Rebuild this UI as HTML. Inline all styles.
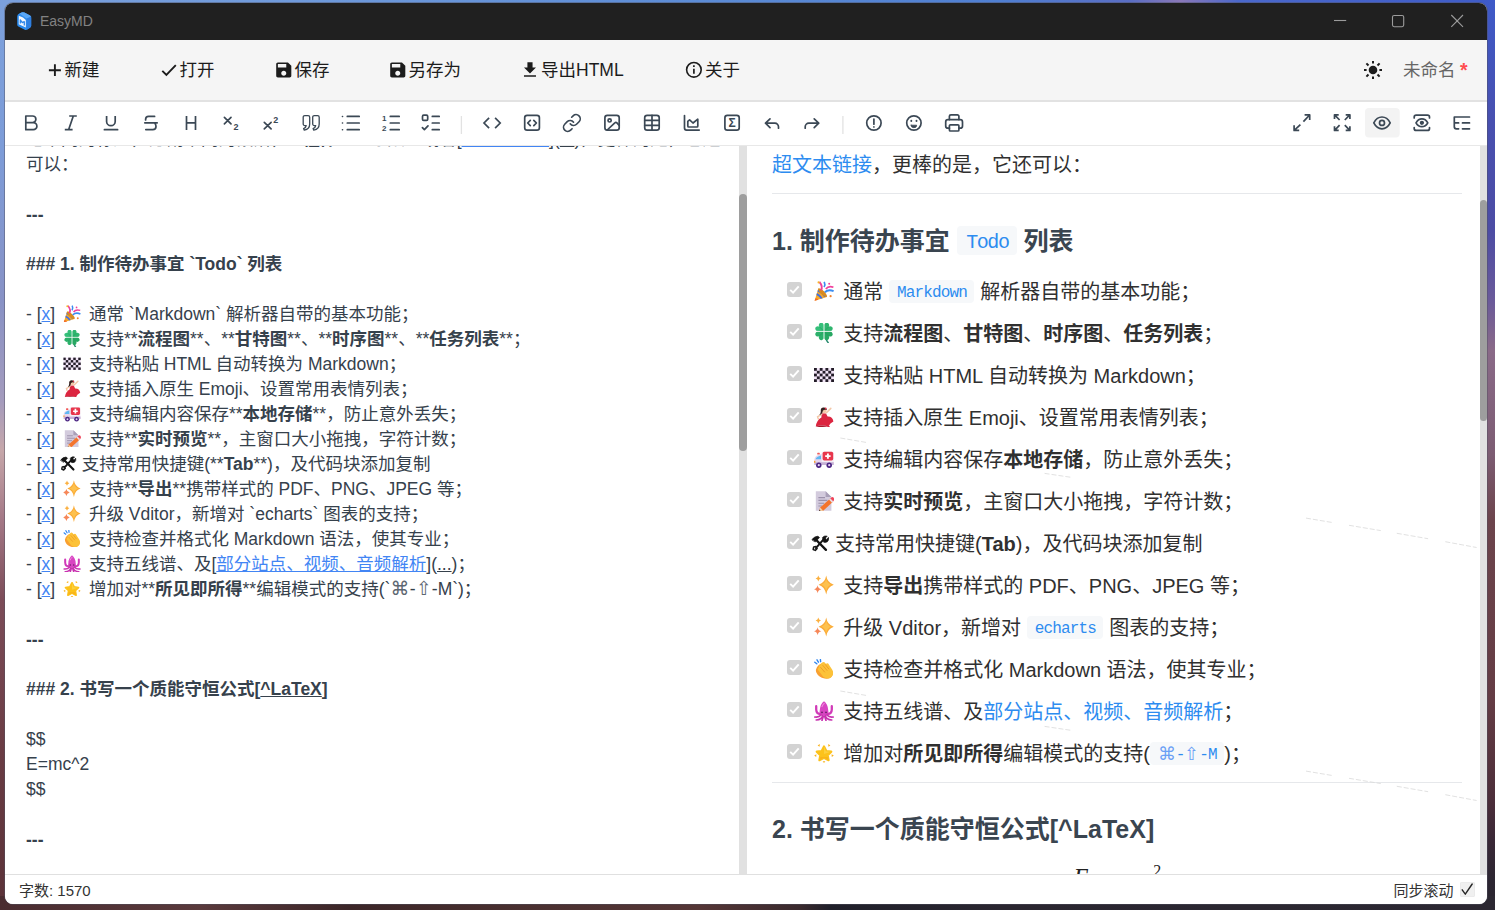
<!DOCTYPE html>
<html lang="zh-CN">
<head>
<meta charset="utf-8">
<title>EasyMD</title>
<style>
*{box-sizing:border-box;margin:0;padding:0}
html,body{width:1495px;height:910px;overflow:hidden}
body{position:relative;background:#4a3034;font-family:"Liberation Sans","Noto Sans CJK SC",sans-serif;}
.abs{position:absolute}
#bgtop{left:0;top:0;width:1495px;height:12px;background:linear-gradient(90deg,#7aa0dc 0,#6f9adb 300px,#5c8cd6 700px,#4f7fd2 1000px,#5a6ec4 1130px,#8a78b8 1180px,#4a68cc 1240px,#3f5cc8 1495px)}
#bgleft{left:0;top:0;width:14px;height:910px;background:linear-gradient(180deg,#7ba0dc 0,#7d9cd8 150px,#8892c6 300px,#a49bbd 400px,#c6a7aa 450px,#a47886 520px,#7c4c58 600px,#6a3c44 750px,#5a3238 910px)}
#bgright{left:1480px;top:0;width:15px;height:910px;background:linear-gradient(180deg,#3e5ac8 0,#4850b0 120px,#4c4ca4 230px,#6a5a9a 300px,#8a6a88 350px,#7c5c72 455px,#6c444c 520px,#643c44 700px,#4c2e3a 800px,#3a2836 840px,#2c2632 880px,#2a2630 910px)}
#bgbot{left:0;top:896px;width:1495px;height:14px;background:linear-gradient(90deg,#4a2c30 0,#5a3a3c 200px,#3c2628 350px,#4a3030 520px,#553636 700px,#3a2a2e 800px,#20202a 830px,#2a2630 1000px,#2c2832 1495px)}
#win{left:5px;top:3px;width:1482px;height:901px;border-radius:8px;overflow:hidden;background:#fff;box-shadow:0 0 0 1px rgba(80,80,95,.45)}
#title{left:0;top:0;width:1482px;height:37px;background:#202020}
#title .name{left:35px;top:9px;font-size:14px;line-height:18px;color:#828282;white-space:nowrap}
#menu{left:0;top:37px;width:1482px;height:60px;background:#f5f5f5}
#menu .mi{position:absolute;top:17px;font-size:17.5px;line-height:26px;color:#1c1c1c;white-space:nowrap}
#menusep{left:0;top:97px;width:1482px;height:2px;background:#e2e2e2}
#tb{left:0;top:99px;width:1482px;height:44px;background:#fff;border-bottom:1px solid #e8e8e8}

#lp{left:0;top:143px;width:734px;height:728px;overflow:hidden;background:#fff;color:#36414c;font-size:17.5px}
#lp .ln{position:absolute;left:21px;height:25px;line-height:25px;white-space:nowrap}
#lp .ln{margin-top:-143px}
#lp .b,#lp b{font-weight:700}
#lp a{color:#4285f4;text-decoration:underline}
#lp u{text-decoration:underline}
#lp i{font-style:italic}
.eb{display:inline-block;position:relative;height:1px;vertical-align:baseline}
.eb svg{position:absolute;left:50%;bottom:-4px;transform:translateX(-50%)}
.sym{font-family:"DejaVu Sans","Noto Sans CJK SC",sans-serif;margin:0 0.2px;font-size:19px;line-height:10px;color:#5d6771}
#rp .sym{margin:0 -0.2px;color:#6b9ff5;font-size:18px;letter-spacing:0;line-height:10px}
#rp .art{position:absolute;left:0;top:0;pointer-events:none}
#ls{left:734px;top:143px;width:8px;height:728px;background:#e1e1e1}
#ls i{position:absolute;left:0;top:48px;width:8px;height:257px;border-radius:4px;background:#9e9e9e}
#rp{left:742px;top:143px;width:733px;height:728px;overflow:hidden;background:#fff;color:#303030;font-size:20px}
#rp>*{margin-top:-143px;margin-left:-742px}
#rp .rl{position:absolute;height:30px;line-height:30px;white-space:nowrap}
#rp .rh{position:absolute;left:767px;height:36px;line-height:36px;font-size:25px;font-weight:700;white-space:nowrap;color:#3a4550}
#rp a{color:#2d8cf0}
#rp b{font-weight:700}
#rp .hr{position:absolute;left:767px;width:690px;height:1px;background:#e6e8eb}
#rp code{font-family:"Liberation Mono",monospace;font-size:16px;letter-spacing:-0.85px;color:#2d8cf0;background:#f6f8fa;border-radius:4px;padding:4.2px 6.9px 0.3px 7.7px;margin:0 0.7px 0 0.5px;font-weight:400;position:relative;top:-1.5px}
#rp .rh code{font-size:20px;letter-spacing:-1.4px;padding:5px 8px 1px 9.4px;margin:0;top:-2px}
#rp .cb{position:absolute;left:782px;width:15px;height:15px;border-radius:3px;background:#d3d3d3}
#rp .cb svg{display:block}
#rp .math{position:absolute;font-family:"Liberation Serif",serif;font-size:24.500px;line-height:30px;white-space:nowrap;color:#222;word-spacing:3.500px;letter-spacing:0.500px}
#rp .math sup{font-size:16px;vertical-align:10px;line-height:0}
#rs{left:1475px;top:143px;width:7px;height:728px;background:#e1e1e1}
#rs i{position:absolute;left:0;top:54px;width:7px;height:221px;border-radius:3.5px;background:#9e9e9e}
#ft{left:0;top:871px;width:1482px;height:30px;background:#fff;border-top:1px solid #e0e0e0;font-size:15px;line-height:20px;color:#333}
#ft .fcb{left:1455px;top:7.200px;width:14.5px;height:14.5px;border-radius:2px;background:#f0f0f0;font-family:"DejaVu Sans",sans-serif;font-size:17px;line-height:13px;text-align:center;color:#222;box-shadow:inset 0 0 0 0.6px #e6e6e6}
#ft .fcb svg{display:block}
</style>
</head>
<body>
<div id="bgtop" class="abs"></div>
<div id="bgleft" class="abs"></div>
<div id="bgright" class="abs"></div>
<div id="bgbot" class="abs"></div>
<div id="win" class="abs">
<div id="title" class="abs"><span class="name abs">EasyMD</span></div>
<div id="menu" class="abs">
<span class="mi" style="left:59.5px">新建</span>
<span class="mi" style="left:174.5px">打开</span>
<span class="mi" style="left:289.5px">保存</span>
<span class="mi" style="left:403.5px">另存为</span>
<span class="mi" style="left:536px">导出HTML</span>
<span class="mi" style="left:700px">关于</span>
<span class="mi" style="left:1398px;color:#666">未命名</span>
<span class="mi" style="left:1455px;color:#ff4d4f;top:16.5px;font-weight:700;font-size:19.5px">*</span>
</div>
<div id="menusep" class="abs"></div>
<div id="tb" class="abs"></div>
<!--PS--><div id="lp" class="abs">
<div class="ln " style="top:123.5px">记不同的标题，分割不同的段落，**<b>粗体</b>**、*<i>斜体</i>* 或者[<a>超文本链接</a>](<u>...</u>)，更棒的是，它还</div>
<div class="ln " style="top:148.5px">可以：</div>
<div class="ln b" style="top:199.5px">---</div>
<div class="ln b" style="top:248.5px">### 1. 制作待办事宜 `Todo` 列表</div>
<div class="ln " style="top:298.5px">- [<a>x</a>] <span class="eb" style="width:24px"><svg width="17.5" height="17.5" viewBox="0 0 20 20" style="bottom:-2.5px"><path d="M0.6 19.7 L4.3 7.6 Q9.6 9.2 12.9 15.9 Z" fill="#f7a928"/><path d="M3 12 Q6.4 13.2 8.7 17.2 L6.7 17.8 Q5 14.8 2.4 13.9 Z M4.1 8.5 Q8.8 10 11.8 15.3 L10.2 16.2 Q7.6 11.9 3.5 10.4Z" fill="#3f6fe4"/><path d="M1.4 17.2 Q3.3 17.6 4.5 18.8 L0.6 19.7Z" fill="#f2682a"/><ellipse cx="8.6" cy="11.7" rx="1.9" ry="5.9" transform="rotate(-46 8.6 11.7)" fill="#d98a1e"/><path d="M7 9.2 Q9.2 5.4 5.4 0.8" stroke="#f0409a" stroke-width="1.9" fill="none"/><path d="M10.8 11.2 Q14.5 8 19.6 10.2" stroke="#3b8cf0" stroke-width="1.9" fill="none"/><path d="M11.8 8 Q14.5 4.4 19.4 6.2" stroke="#f0409a" stroke-width="1.7" fill="none"/><path d="M10 6 Q11.6 3.6 10.2 0.8" stroke="#3b8cf0" stroke-width="1.7" fill="none"/><circle cx="4.6" cy="1.4" r="1.1" fill="#f8b62a"/><circle cx="15.2" cy="2.8" r="1" fill="#f0409a"/><circle cx="16.6" cy="15.2" r="1.1" fill="#f08030"/></svg></span> 通常 `Markdown` 解析器自带的基本功能；</div>
<div class="ln " style="top:323.5px">- [<a>x</a>] <span class="eb" style="width:24px"><svg width="17.5" height="17.5" viewBox="0 0 20 20" style="bottom:-2.5px"><path d="M10.3 9 Q10.8 15.5 14.2 19.7" stroke="#2a8a70" stroke-width="1.5" fill="none" stroke-linecap="round"/><path d="M0 0.6 C-6.4 -2.6 -5.8 -8.8 -2.7 -8.8 C-1.2 -8.8 0 -7.8 0 -6.6 C0 -7.8 1.2 -8.8 2.7 -8.8 C5.8 -8.8 6.4 -2.6 0 0.6Z" transform="translate(10 8.4) rotate(-45)" fill="#35c07a"/><path d="M0 0.6 C-6.4 -2.6 -5.8 -8.8 -2.7 -8.8 C-1.2 -8.8 0 -7.8 0 -6.6 C0 -7.8 1.2 -8.8 2.7 -8.8 C5.8 -8.8 6.4 -2.6 0 0.6Z" transform="translate(10 8.4) rotate(45)" fill="#2fb56e"/><path d="M0 0.6 C-6.4 -2.6 -5.8 -8.8 -2.7 -8.8 C-1.2 -8.8 0 -7.8 0 -6.6 C0 -7.8 1.2 -8.8 2.7 -8.8 C5.8 -8.8 6.4 -2.6 0 0.6Z" transform="translate(10 8.4) rotate(135)" fill="#27a862"/><path d="M0 0.6 C-6.4 -2.6 -5.8 -8.8 -2.7 -8.8 C-1.2 -8.8 0 -7.8 0 -6.6 C0 -7.8 1.2 -8.8 2.7 -8.8 C5.8 -8.8 6.4 -2.6 0 0.6Z" transform="translate(10 8.4) rotate(-135)" fill="#2cb06a"/><path d="M5.5 3.9 L14.5 12.9 M14.5 3.9 L5.5 12.9" stroke="#1f9a5a" stroke-width="0.6"/><path d="M10 0 V8.4 M10 8.4 V17 M1 8.4 H19" stroke="#fff" stroke-width="0.9"/></svg></span> 支持**<b>流程图</b>**、**<b>甘特图</b>**、**<b>时序图</b>**、**<b>任务列表</b>**；</div>
<div class="ln " style="top:348.5px">- [<a>x</a>] <span class="eb" style="width:24px"><svg width="17.5" height="17.5" viewBox="0 0 20 20" style="bottom:-2.5px"><rect x="0" y="3" width="20" height="14" fill="#f1e4f6"/><rect x="0" y="3" width="2.86" height="2.8" fill="#231c28"/><rect x="5.71" y="3" width="2.86" height="2.8" fill="#231c28"/><rect x="11.43" y="3" width="2.86" height="2.8" fill="#231c28"/><rect x="17.14" y="3" width="2.86" height="2.8" fill="#231c28"/><rect x="2.86" y="5.8" width="2.86" height="2.8" fill="#231c28"/><rect x="8.57" y="5.8" width="2.86" height="2.8" fill="#231c28"/><rect x="14.29" y="5.8" width="2.86" height="2.8" fill="#231c28"/><rect x="0" y="8.6" width="2.86" height="2.8" fill="#231c28"/><rect x="5.71" y="8.6" width="2.86" height="2.8" fill="#231c28"/><rect x="11.43" y="8.6" width="2.86" height="2.8" fill="#231c28"/><rect x="17.14" y="8.6" width="2.86" height="2.8" fill="#231c28"/><rect x="2.86" y="11.4" width="2.86" height="2.8" fill="#231c28"/><rect x="8.57" y="11.4" width="2.86" height="2.8" fill="#231c28"/><rect x="14.29" y="11.4" width="2.86" height="2.8" fill="#231c28"/><rect x="0" y="14.2" width="2.86" height="2.8" fill="#231c28"/><rect x="5.71" y="14.2" width="2.86" height="2.8" fill="#231c28"/><rect x="11.43" y="14.2" width="2.86" height="2.8" fill="#231c28"/><rect x="17.14" y="14.2" width="2.86" height="2.8" fill="#231c28"/></svg></span> 支持粘贴 HTML 自动转换为 Markdown；</div>
<div class="ln " style="top:373.5px">- [<a>x</a>] <span class="eb" style="width:24px"><svg width="17.5" height="17.5" viewBox="0 0 20 20" style="bottom:-2.5px"><path d="M7.6 6.2 L12 6.4 L13.6 9.6 Q18.6 9.4 19.4 14.6 Q16 16 14.4 19.6 Q8.5 17.6 1.8 19.4 Q2.6 13.4 7.4 10.6 Z" fill="#dc2540"/><path d="M1.8 19.4 Q8 17.4 14.4 19.6 Q8 20.4 1.8 19.4Z" fill="#a8182c"/><path d="M12.4 5.8 L16.8 1.4" stroke="#f3c7a8" stroke-width="1.6" stroke-linecap="round"/><path d="M7.8 7.2 L3.6 9.8 L4.4 12" stroke="#f3c7a8" stroke-width="1.5" stroke-linecap="round" fill="none"/><circle cx="9.8" cy="3.5" r="2.7" fill="#f3c7a8"/><path d="M6.8 4.4 Q6.2 0.3 9.8 0.4 Q12.8 0.5 12.8 3 Q10.2 2 8.8 3.8 Q8.6 7.2 5.2 8 Q6.8 6.4 6.8 4.4Z" fill="#33201f"/><circle cx="11.7" cy="1.5" r="0.9" fill="#e8304a"/><path d="M13.4 19.2 L15.8 20" stroke="#dc2540" stroke-width="1.3"/></svg></span> 支持插入原生 Emoji、设置常用表情列表；</div>
<div class="ln " style="top:398.5px">- [<a>x</a>] <span class="eb" style="width:24px"><svg width="17.5" height="17.5" viewBox="0 0 20 20" style="bottom:-2.5px"><path d="M0.4 11 Q0.4 7.4 4.4 6 L8 4.8 V16 H0.4Z" fill="#e6d6ee"/><path d="M1.6 10.2 Q2.2 7.6 7 6.4 V10.2Z" fill="#5fb8f2"/><rect x="7.6" y="2.4" width="12.2" height="13.6" rx="1.6" fill="#f4eef6"/><rect x="8.6" y="2.8" width="10.6" height="8.6" rx="1.6" fill="#e8364c"/><path d="M13.9 4.4 V9.8 M11.2 7.1 H16.6" stroke="#fff" stroke-width="1.9"/><rect x="0.4" y="13.2" width="19.4" height="2.8" fill="#c6b2d6"/><circle cx="4.8" cy="16.2" r="2.7" fill="#4a2482"/><circle cx="4.8" cy="16.2" r="1.1" fill="#e6d8f4"/><circle cx="15.2" cy="16.2" r="2.7" fill="#4a2482"/><circle cx="15.2" cy="16.2" r="1.1" fill="#e6d8f4"/><rect x="3.2" y="3.8" width="2.6" height="1.8" rx="0.6" fill="#f05a5a"/><rect x="0" y="11.8" width="1.4" height="2" fill="#f8a030"/></svg></span> 支持编辑内容保存**<b>本地存储</b>**，防止意外丢失；</div>
<div class="ln " style="top:423.5px">- [<a>x</a>] <span class="eb" style="width:24px"><svg width="17.5" height="17.5" viewBox="0 0 20 20" style="bottom:-2.5px"><path d="M1.8 0.2 H11.6 L17.4 6 V19.8 H1.8Z" fill="#d3cbdd"/><path d="M11.6 0.2 L17.4 6 H11.6Z" fill="#a99fb8"/><path d="M4.4 6.6 H11 M4.4 9.4 H13.4 M4.4 12.2 H10 M4.4 15 H8" stroke="#9c91ab" stroke-width="1.1"/><path d="M6.2 16.6 L16.2 7.4 L19.2 10.6 L9.2 19.8 L5 20.2Z" fill="#f4742c"/><path d="M16.2 7.4 L17.6 6.2 Q18.6 5.6 19.6 6.6 L20 7.4 Q20.6 8.6 19.8 9.6 L19.2 10.6Z" fill="#f0455a"/><path d="M15 8.5 L16.2 7.4 L19.2 10.6 L18 11.7Z" fill="#e9dfe8"/><path d="M6.2 16.6 L9.2 19.8 L5 20.2Z" fill="#f6d2a6"/><path d="M5 20.2 L5.5 18.6 L6.6 19.9Z" fill="#3a2a2a"/></svg></span> 支持**<b>实时预览</b>**，主窗口大小拖拽，字符计数；</div>
<div class="ln " style="top:448.5px">- [<a>x</a>] <span class="eb" style="width:16.8px"><svg width="16.5" height="16.5" viewBox="0 0 20 20" style="bottom:-2px"><g fill="none" stroke="#141414" stroke-linecap="round"><path d="M5.6 6.4 L16.6 17.6" stroke-width="2.6"/><path d="M1.2 6.2 Q3.2 2.6 7.8 2.4 L9.4 4 L5 8.6 Z" fill="#141414" stroke-width="0.8" stroke-linejoin="round"/><path d="M15.2 4.6 L5.4 15.6" stroke-width="2.2"/><path d="M5.6 14 L3 14.4 L2.4 17.2 L4.8 18.2 L6.8 16.2" stroke-width="1.7" stroke-linejoin="round"/><path d="M13 3.6 Q15.2 1.4 18 2.4 L15.8 4.6 L17.2 6 L19.4 3.8 Q20.2 6.8 18.2 8.6 Q16 10 13.8 8.8 Z" fill="#141414" stroke-width="0.8"/></g></svg></span> 支持常用快捷键(**<b>Tab</b>**)，及代码块添加复制</div>
<div class="ln " style="top:473.5px">- [<a>x</a>] <span class="eb" style="width:24px"><svg width="17.5" height="17.5" viewBox="0 0 20 20" style="bottom:-2.5px"><path d="M12.2 0.4 Q13.3 7.6 19.8 9.7 Q13.3 11.8 12.2 19.6 Q11.1 11.8 4.6 9.7 Q11.1 7.6 12.2 0.4Z" fill="#fbac38"/><path d="M12.2 3.5 Q13 8.5 17.2 9.7 Q13 10.9 12.2 16 Q11.4 10.9 7.2 9.7 Q11.4 8.5 12.2 3.5Z" fill="#fdc14e"/><path d="M4.3 0.6 Q4.7 3 7 3.6 Q4.7 4.2 4.3 6.6 Q3.9 4.2 1.6 3.6 Q3.9 3 4.3 0.6Z" fill="#fbb040"/><path d="M3.6 10.2 Q4.1 13.5 7.4 14.2 Q4.1 14.9 3.6 18.2 Q3.1 14.9 -0.2 14.2 Q3.1 13.5 3.6 10.2Z" fill="#f68758"/></svg></span> 支持**<b>导出</b>**携带样式的 PDF、PNG、JPEG 等；</div>
<div class="ln " style="top:498.5px">- [<a>x</a>] <span class="eb" style="width:24px"><svg width="17.5" height="17.5" viewBox="0 0 20 20" style="bottom:-2.5px"><path d="M12.2 0.4 Q13.3 7.6 19.8 9.7 Q13.3 11.8 12.2 19.6 Q11.1 11.8 4.6 9.7 Q11.1 7.6 12.2 0.4Z" fill="#fbac38"/><path d="M12.2 3.5 Q13 8.5 17.2 9.7 Q13 10.9 12.2 16 Q11.4 10.9 7.2 9.7 Q11.4 8.5 12.2 3.5Z" fill="#fdc14e"/><path d="M4.3 0.6 Q4.7 3 7 3.6 Q4.7 4.2 4.3 6.6 Q3.9 4.2 1.6 3.6 Q3.9 3 4.3 0.6Z" fill="#fbb040"/><path d="M3.6 10.2 Q4.1 13.5 7.4 14.2 Q4.1 14.9 3.6 18.2 Q3.1 14.9 -0.2 14.2 Q3.1 13.5 3.6 10.2Z" fill="#f68758"/></svg></span> 升级 Vditor，新增对 `echarts` 图表的支持；</div>
<div class="ln " style="top:523.5px">- [<a>x</a>] <span class="eb" style="width:24px"><svg width="17.5" height="17.5" viewBox="0 0 20 20" style="bottom:-2.5px"><path d="M2 10.5 Q3.5 5.5 8 4.2 L13.6 8 Q20.4 11.4 18.6 16.2 Q16.4 20.4 10.6 19.6 Q4.6 18.4 2.6 14 Q1.6 12.2 2 10.5Z" fill="#f9a030"/><path d="M5.4 6.2 L8.6 3.2 Q9.8 2.4 10.8 3.6 L12 5 Q12.8 3.6 14.2 4.6 L18.4 11 Q20.2 15.4 17.2 18.2 Q13.4 20.8 9.4 18 L4.2 11.2 Q3.4 9.8 4.6 8.8 Z" fill="#fcc238"/><path d="M6.6 8.4 L10.6 13 M8.8 6.4 L13 11.4 M11.4 5.6 L14.8 10" stroke="#ee9a26" stroke-width="0.9" fill="none" stroke-linecap="round"/><path d="M2.8 4.8 L0.8 3.2 M4.4 3.2 L3 0.8 M6.6 2.6 L6.4 0.4" stroke="#2f86f0" stroke-width="1.4" stroke-linecap="round"/></svg></span> 支持检查并格式化 Markdown 语法，使其专业；</div>
<div class="ln " style="top:548.5px">- [<a>x</a>] <span class="eb" style="width:24px"><svg width="17.5" height="17.5" viewBox="0 0 20 20" style="bottom:-2.5px"><path d="M5.8 9 Q6.2 3 10 0.2 Q13.8 3 14.2 9 Q15 12 13.8 14.2 H6.2 Q5 12 5.8 9Z" fill="#d845c2"/><path d="M6.4 13 Q2.4 13 2.2 8.5 L2.2 5.2 M13.6 13 Q17.6 13 17.8 8.5 L17.8 5.2" stroke="#d13ab8" stroke-width="2.3" fill="none" stroke-linecap="round"/><path d="M7 14 Q5 16.6 0.8 16 M13 14 Q15 16.6 19.2 16 M8.6 14.6 Q8 18.6 2.2 19 M11.4 14.6 Q12 18.6 17.8 19 M9.4 15 L8 19.4 M10.6 15 L12 19.4" stroke="#c832b0" stroke-width="1.7" fill="none" stroke-linecap="round"/><circle cx="8" cy="11.4" r="0.8" fill="#5a1a5a"/><circle cx="12" cy="11.4" r="0.8" fill="#5a1a5a"/><path d="M8 5.6 Q8.8 3.4 10.2 2.4" stroke="#f08ade" stroke-width="1.1" fill="none" stroke-linecap="round"/></svg></span> 支持五线谱、及[<a>部分站点、视频、音频解析</a>](<u>...</u>)；</div>
<div class="ln " style="top:573.5px">- [<a>x</a>] <span class="eb" style="width:24px"><svg width="17.5" height="17.5" viewBox="0 0 20 20" style="bottom:-2.5px"><path d="M10 3.4 L12.3 8 L17.3 8.7 L13.7 12.2 L14.6 17.2 L10 14.8 L5.4 17.2 L6.3 12.2 L2.7 8.7 L7.7 8Z" fill="#fcc21b" stroke="#fcc21b" stroke-width="2.2" stroke-linejoin="round"/><path d="M10 3.4 L11.9 8.2 L16.8 8.8 L10 11Z" fill="#fedc5a" opacity="0.55"/><path d="M6.3 14 L5.4 17.2 L10 14.8 L14.6 17.2 L13.9 14 Z" fill="#f5a81c" opacity="0.55"/><g fill="#f9b21c"><path d="M3.6 2.6 L5.8 1 L5.6 3.8Z"/><path d="M16.4 2.6 L14.2 1 L14.4 3.8Z"/><path d="M0.2 12.4 L2.4 11.2 L2.2 14Z"/><path d="M19.8 12.4 L17.6 11.2 L17.8 14Z"/><path d="M10 20 L8.6 18.2 L11.4 18.2Z"/></g></svg></span> 增加对**<b>所见即所得</b>**编辑模式的支持(`<span class="sym">⌘</span>-<span class="sym">⇧</span>-M`)；</div>
<div class="ln b" style="top:624.5px">---</div>
<div class="ln b" style="top:673.5px">### 2. 书写一个质能守恒公式[<u>^LaTeX</u>]</div>
<div class="ln " style="top:723.5px">$$</div>
<div class="ln " style="top:748.5px">E=mc^2</div>
<div class="ln " style="top:773.5px">$$</div>
<div class="ln b" style="top:824.5px">---</div>
</div>
<div id="ls" class="abs"><i></i></div>
<div id="rp" class="abs">
<div class="rl" style="top:147px;left:767px"><a>超文本链接</a>，更棒的是，它还可以：</div>
<div class="hr" style="top:190px"></div>
<div class="rh" style="top:220px">1. 制作待办事宜 <code>Todo</code> 列表</div>
<span class="cb" style="top:278.8px"><svg width="15" height="15" viewBox="0 0 15 15"><path d="M3.2 7.8 L6.1 10.7 L11.7 4.3" fill="none" stroke="#fff" stroke-width="1.9"/></svg></span>
<div class="rl" style="top:274px;left:805.3px"><span class="eb" style="width:27.4px"><svg width="20" height="20" viewBox="0 0 20 20" style="bottom:-2px"><path d="M0.6 19.7 L4.3 7.6 Q9.6 9.2 12.9 15.9 Z" fill="#f7a928"/><path d="M3 12 Q6.4 13.2 8.7 17.2 L6.7 17.8 Q5 14.8 2.4 13.9 Z M4.1 8.5 Q8.8 10 11.8 15.3 L10.2 16.2 Q7.6 11.9 3.5 10.4Z" fill="#3f6fe4"/><path d="M1.4 17.2 Q3.3 17.6 4.5 18.8 L0.6 19.7Z" fill="#f2682a"/><ellipse cx="8.6" cy="11.7" rx="1.9" ry="5.9" transform="rotate(-46 8.6 11.7)" fill="#d98a1e"/><path d="M7 9.2 Q9.2 5.4 5.4 0.8" stroke="#f0409a" stroke-width="1.9" fill="none"/><path d="M10.8 11.2 Q14.5 8 19.6 10.2" stroke="#3b8cf0" stroke-width="1.9" fill="none"/><path d="M11.8 8 Q14.5 4.4 19.4 6.2" stroke="#f0409a" stroke-width="1.7" fill="none"/><path d="M10 6 Q11.6 3.6 10.2 0.8" stroke="#3b8cf0" stroke-width="1.7" fill="none"/><circle cx="4.6" cy="1.4" r="1.1" fill="#f8b62a"/><circle cx="15.2" cy="2.8" r="1" fill="#f0409a"/><circle cx="16.6" cy="15.2" r="1.1" fill="#f08030"/></svg></span> 通常 <code>Markdown</code> 解析器自带的基本功能；</div>
<span class="cb" style="top:320.8px"><svg width="15" height="15" viewBox="0 0 15 15"><path d="M3.2 7.8 L6.1 10.7 L11.7 4.3" fill="none" stroke="#fff" stroke-width="1.9"/></svg></span>
<div class="rl" style="top:316px;left:805.3px"><span class="eb" style="width:27.4px"><svg width="20" height="20" viewBox="0 0 20 20" style="bottom:-2px"><path d="M10.3 9 Q10.8 15.5 14.2 19.7" stroke="#2a8a70" stroke-width="1.5" fill="none" stroke-linecap="round"/><path d="M0 0.6 C-6.4 -2.6 -5.8 -8.8 -2.7 -8.8 C-1.2 -8.8 0 -7.8 0 -6.6 C0 -7.8 1.2 -8.8 2.7 -8.8 C5.8 -8.8 6.4 -2.6 0 0.6Z" transform="translate(10 8.4) rotate(-45)" fill="#35c07a"/><path d="M0 0.6 C-6.4 -2.6 -5.8 -8.8 -2.7 -8.8 C-1.2 -8.8 0 -7.8 0 -6.6 C0 -7.8 1.2 -8.8 2.7 -8.8 C5.8 -8.8 6.4 -2.6 0 0.6Z" transform="translate(10 8.4) rotate(45)" fill="#2fb56e"/><path d="M0 0.6 C-6.4 -2.6 -5.8 -8.8 -2.7 -8.8 C-1.2 -8.8 0 -7.8 0 -6.6 C0 -7.8 1.2 -8.8 2.7 -8.8 C5.8 -8.8 6.4 -2.6 0 0.6Z" transform="translate(10 8.4) rotate(135)" fill="#27a862"/><path d="M0 0.6 C-6.4 -2.6 -5.8 -8.8 -2.7 -8.8 C-1.2 -8.8 0 -7.8 0 -6.6 C0 -7.8 1.2 -8.8 2.7 -8.8 C5.8 -8.8 6.4 -2.6 0 0.6Z" transform="translate(10 8.4) rotate(-135)" fill="#2cb06a"/><path d="M5.5 3.9 L14.5 12.9 M14.5 3.9 L5.5 12.9" stroke="#1f9a5a" stroke-width="0.6"/><path d="M10 0 V8.4 M10 8.4 V17 M1 8.4 H19" stroke="#fff" stroke-width="0.9"/></svg></span> 支持<b>流程图</b>、<b>甘特图</b>、<b>时序图</b>、<b>任务列表</b>；</div>
<span class="cb" style="top:362.8px"><svg width="15" height="15" viewBox="0 0 15 15"><path d="M3.2 7.8 L6.1 10.7 L11.7 4.3" fill="none" stroke="#fff" stroke-width="1.9"/></svg></span>
<div class="rl" style="top:358px;left:805.3px"><span class="eb" style="width:27.4px"><svg width="20" height="20" viewBox="0 0 20 20" style="bottom:-2px"><rect x="0" y="3" width="20" height="14" fill="#f1e4f6"/><rect x="0" y="3" width="2.86" height="2.8" fill="#231c28"/><rect x="5.71" y="3" width="2.86" height="2.8" fill="#231c28"/><rect x="11.43" y="3" width="2.86" height="2.8" fill="#231c28"/><rect x="17.14" y="3" width="2.86" height="2.8" fill="#231c28"/><rect x="2.86" y="5.8" width="2.86" height="2.8" fill="#231c28"/><rect x="8.57" y="5.8" width="2.86" height="2.8" fill="#231c28"/><rect x="14.29" y="5.8" width="2.86" height="2.8" fill="#231c28"/><rect x="0" y="8.6" width="2.86" height="2.8" fill="#231c28"/><rect x="5.71" y="8.6" width="2.86" height="2.8" fill="#231c28"/><rect x="11.43" y="8.6" width="2.86" height="2.8" fill="#231c28"/><rect x="17.14" y="8.6" width="2.86" height="2.8" fill="#231c28"/><rect x="2.86" y="11.4" width="2.86" height="2.8" fill="#231c28"/><rect x="8.57" y="11.4" width="2.86" height="2.8" fill="#231c28"/><rect x="14.29" y="11.4" width="2.86" height="2.8" fill="#231c28"/><rect x="0" y="14.2" width="2.86" height="2.8" fill="#231c28"/><rect x="5.71" y="14.2" width="2.86" height="2.8" fill="#231c28"/><rect x="11.43" y="14.2" width="2.86" height="2.8" fill="#231c28"/><rect x="17.14" y="14.2" width="2.86" height="2.8" fill="#231c28"/></svg></span> 支持粘贴 HTML 自动转换为 Markdown；</div>
<span class="cb" style="top:404.8px"><svg width="15" height="15" viewBox="0 0 15 15"><path d="M3.2 7.8 L6.1 10.7 L11.7 4.3" fill="none" stroke="#fff" stroke-width="1.9"/></svg></span>
<div class="rl" style="top:400px;left:805.3px"><span class="eb" style="width:27.4px"><svg width="20" height="20" viewBox="0 0 20 20" style="bottom:-2px"><path d="M7.6 6.2 L12 6.4 L13.6 9.6 Q18.6 9.4 19.4 14.6 Q16 16 14.4 19.6 Q8.5 17.6 1.8 19.4 Q2.6 13.4 7.4 10.6 Z" fill="#dc2540"/><path d="M1.8 19.4 Q8 17.4 14.4 19.6 Q8 20.4 1.8 19.4Z" fill="#a8182c"/><path d="M12.4 5.8 L16.8 1.4" stroke="#f3c7a8" stroke-width="1.6" stroke-linecap="round"/><path d="M7.8 7.2 L3.6 9.8 L4.4 12" stroke="#f3c7a8" stroke-width="1.5" stroke-linecap="round" fill="none"/><circle cx="9.8" cy="3.5" r="2.7" fill="#f3c7a8"/><path d="M6.8 4.4 Q6.2 0.3 9.8 0.4 Q12.8 0.5 12.8 3 Q10.2 2 8.8 3.8 Q8.6 7.2 5.2 8 Q6.8 6.4 6.8 4.4Z" fill="#33201f"/><circle cx="11.7" cy="1.5" r="0.9" fill="#e8304a"/><path d="M13.4 19.2 L15.8 20" stroke="#dc2540" stroke-width="1.3"/></svg></span> 支持插入原生 Emoji、设置常用表情列表；</div>
<span class="cb" style="top:446.8px"><svg width="15" height="15" viewBox="0 0 15 15"><path d="M3.2 7.8 L6.1 10.7 L11.7 4.3" fill="none" stroke="#fff" stroke-width="1.9"/></svg></span>
<div class="rl" style="top:442px;left:805.3px"><span class="eb" style="width:27.4px"><svg width="20" height="20" viewBox="0 0 20 20" style="bottom:-2px"><path d="M0.4 11 Q0.4 7.4 4.4 6 L8 4.8 V16 H0.4Z" fill="#e6d6ee"/><path d="M1.6 10.2 Q2.2 7.6 7 6.4 V10.2Z" fill="#5fb8f2"/><rect x="7.6" y="2.4" width="12.2" height="13.6" rx="1.6" fill="#f4eef6"/><rect x="8.6" y="2.8" width="10.6" height="8.6" rx="1.6" fill="#e8364c"/><path d="M13.9 4.4 V9.8 M11.2 7.1 H16.6" stroke="#fff" stroke-width="1.9"/><rect x="0.4" y="13.2" width="19.4" height="2.8" fill="#c6b2d6"/><circle cx="4.8" cy="16.2" r="2.7" fill="#4a2482"/><circle cx="4.8" cy="16.2" r="1.1" fill="#e6d8f4"/><circle cx="15.2" cy="16.2" r="2.7" fill="#4a2482"/><circle cx="15.2" cy="16.2" r="1.1" fill="#e6d8f4"/><rect x="3.2" y="3.8" width="2.6" height="1.8" rx="0.6" fill="#f05a5a"/><rect x="0" y="11.8" width="1.4" height="2" fill="#f8a030"/></svg></span> 支持编辑内容保存<b>本地存储</b>，防止意外丢失；</div>
<span class="cb" style="top:488.8px"><svg width="15" height="15" viewBox="0 0 15 15"><path d="M3.2 7.8 L6.1 10.7 L11.7 4.3" fill="none" stroke="#fff" stroke-width="1.9"/></svg></span>
<div class="rl" style="top:484px;left:805.3px"><span class="eb" style="width:27.4px"><svg width="20" height="20" viewBox="0 0 20 20" style="bottom:-2px"><path d="M1.8 0.2 H11.6 L17.4 6 V19.8 H1.8Z" fill="#d3cbdd"/><path d="M11.6 0.2 L17.4 6 H11.6Z" fill="#a99fb8"/><path d="M4.4 6.6 H11 M4.4 9.4 H13.4 M4.4 12.2 H10 M4.4 15 H8" stroke="#9c91ab" stroke-width="1.1"/><path d="M6.2 16.6 L16.2 7.4 L19.2 10.6 L9.2 19.8 L5 20.2Z" fill="#f4742c"/><path d="M16.2 7.4 L17.6 6.2 Q18.6 5.6 19.6 6.6 L20 7.4 Q20.6 8.6 19.8 9.6 L19.2 10.6Z" fill="#f0455a"/><path d="M15 8.5 L16.2 7.4 L19.2 10.6 L18 11.7Z" fill="#e9dfe8"/><path d="M6.2 16.6 L9.2 19.8 L5 20.2Z" fill="#f6d2a6"/><path d="M5 20.2 L5.5 18.6 L6.6 19.9Z" fill="#3a2a2a"/></svg></span> 支持<b>实时预览</b>，主窗口大小拖拽，字符计数；</div>
<span class="cb" style="top:530.8px"><svg width="15" height="15" viewBox="0 0 15 15"><path d="M3.2 7.8 L6.1 10.7 L11.7 4.3" fill="none" stroke="#fff" stroke-width="1.9"/></svg></span>
<div class="rl" style="top:526px;left:805.3px"><span class="eb" style="width:19.2px"><svg width="18" height="18" viewBox="0 0 20 20" style="bottom:-1px"><g fill="none" stroke="#141414" stroke-linecap="round"><path d="M5.6 6.4 L16.6 17.6" stroke-width="2.6"/><path d="M1.2 6.2 Q3.2 2.6 7.8 2.4 L9.4 4 L5 8.6 Z" fill="#141414" stroke-width="0.8" stroke-linejoin="round"/><path d="M15.2 4.6 L5.4 15.6" stroke-width="2.2"/><path d="M5.6 14 L3 14.4 L2.4 17.2 L4.8 18.2 L6.8 16.2" stroke-width="1.7" stroke-linejoin="round"/><path d="M13 3.6 Q15.2 1.4 18 2.4 L15.8 4.6 L17.2 6 L19.4 3.8 Q20.2 6.8 18.2 8.6 Q16 10 13.8 8.8 Z" fill="#141414" stroke-width="0.8"/></g></svg></span> 支持常用快捷键(<b>Tab</b>)，及代码块添加复制</div>
<span class="cb" style="top:572.8px"><svg width="15" height="15" viewBox="0 0 15 15"><path d="M3.2 7.8 L6.1 10.7 L11.7 4.3" fill="none" stroke="#fff" stroke-width="1.9"/></svg></span>
<div class="rl" style="top:568px;left:805.3px"><span class="eb" style="width:27.4px"><svg width="20" height="20" viewBox="0 0 20 20" style="bottom:-2px"><path d="M12.2 0.4 Q13.3 7.6 19.8 9.7 Q13.3 11.8 12.2 19.6 Q11.1 11.8 4.6 9.7 Q11.1 7.6 12.2 0.4Z" fill="#fbac38"/><path d="M12.2 3.5 Q13 8.5 17.2 9.7 Q13 10.9 12.2 16 Q11.4 10.9 7.2 9.7 Q11.4 8.5 12.2 3.5Z" fill="#fdc14e"/><path d="M4.3 0.6 Q4.7 3 7 3.6 Q4.7 4.2 4.3 6.6 Q3.9 4.2 1.6 3.6 Q3.9 3 4.3 0.6Z" fill="#fbb040"/><path d="M3.6 10.2 Q4.1 13.5 7.4 14.2 Q4.1 14.9 3.6 18.2 Q3.1 14.9 -0.2 14.2 Q3.1 13.5 3.6 10.2Z" fill="#f68758"/></svg></span> 支持<b>导出</b>携带样式的 PDF、PNG、JPEG 等；</div>
<span class="cb" style="top:614.8px"><svg width="15" height="15" viewBox="0 0 15 15"><path d="M3.2 7.8 L6.1 10.7 L11.7 4.3" fill="none" stroke="#fff" stroke-width="1.9"/></svg></span>
<div class="rl" style="top:610px;left:805.3px"><span class="eb" style="width:27.4px"><svg width="20" height="20" viewBox="0 0 20 20" style="bottom:-2px"><path d="M12.2 0.4 Q13.3 7.6 19.8 9.7 Q13.3 11.8 12.2 19.6 Q11.1 11.8 4.6 9.7 Q11.1 7.6 12.2 0.4Z" fill="#fbac38"/><path d="M12.2 3.5 Q13 8.5 17.2 9.7 Q13 10.9 12.2 16 Q11.4 10.9 7.2 9.7 Q11.4 8.5 12.2 3.5Z" fill="#fdc14e"/><path d="M4.3 0.6 Q4.7 3 7 3.6 Q4.7 4.2 4.3 6.6 Q3.9 4.2 1.6 3.6 Q3.9 3 4.3 0.6Z" fill="#fbb040"/><path d="M3.6 10.2 Q4.1 13.5 7.4 14.2 Q4.1 14.9 3.6 18.2 Q3.1 14.9 -0.2 14.2 Q3.1 13.5 3.6 10.2Z" fill="#f68758"/></svg></span> 升级 Vditor，新增对 <code>echarts</code> 图表的支持；</div>
<span class="cb" style="top:656.8px"><svg width="15" height="15" viewBox="0 0 15 15"><path d="M3.2 7.8 L6.1 10.7 L11.7 4.3" fill="none" stroke="#fff" stroke-width="1.9"/></svg></span>
<div class="rl" style="top:652px;left:805.3px"><span class="eb" style="width:27.4px"><svg width="20" height="20" viewBox="0 0 20 20" style="bottom:-2px"><path d="M2 10.5 Q3.5 5.5 8 4.2 L13.6 8 Q20.4 11.4 18.6 16.2 Q16.4 20.4 10.6 19.6 Q4.6 18.4 2.6 14 Q1.6 12.2 2 10.5Z" fill="#f9a030"/><path d="M5.4 6.2 L8.6 3.2 Q9.8 2.4 10.8 3.6 L12 5 Q12.8 3.6 14.2 4.6 L18.4 11 Q20.2 15.4 17.2 18.2 Q13.4 20.8 9.4 18 L4.2 11.2 Q3.4 9.8 4.6 8.8 Z" fill="#fcc238"/><path d="M6.6 8.4 L10.6 13 M8.8 6.4 L13 11.4 M11.4 5.6 L14.8 10" stroke="#ee9a26" stroke-width="0.9" fill="none" stroke-linecap="round"/><path d="M2.8 4.8 L0.8 3.2 M4.4 3.2 L3 0.8 M6.6 2.6 L6.4 0.4" stroke="#2f86f0" stroke-width="1.4" stroke-linecap="round"/></svg></span> 支持检查并格式化 Markdown 语法，使其专业；</div>
<span class="cb" style="top:698.8px"><svg width="15" height="15" viewBox="0 0 15 15"><path d="M3.2 7.8 L6.1 10.7 L11.7 4.3" fill="none" stroke="#fff" stroke-width="1.9"/></svg></span>
<div class="rl" style="top:694px;left:805.3px"><span class="eb" style="width:27.4px"><svg width="20" height="20" viewBox="0 0 20 20" style="bottom:-2px"><path d="M5.8 9 Q6.2 3 10 0.2 Q13.8 3 14.2 9 Q15 12 13.8 14.2 H6.2 Q5 12 5.8 9Z" fill="#d845c2"/><path d="M6.4 13 Q2.4 13 2.2 8.5 L2.2 5.2 M13.6 13 Q17.6 13 17.8 8.5 L17.8 5.2" stroke="#d13ab8" stroke-width="2.3" fill="none" stroke-linecap="round"/><path d="M7 14 Q5 16.6 0.8 16 M13 14 Q15 16.6 19.2 16 M8.6 14.6 Q8 18.6 2.2 19 M11.4 14.6 Q12 18.6 17.8 19 M9.4 15 L8 19.4 M10.6 15 L12 19.4" stroke="#c832b0" stroke-width="1.7" fill="none" stroke-linecap="round"/><circle cx="8" cy="11.4" r="0.8" fill="#5a1a5a"/><circle cx="12" cy="11.4" r="0.8" fill="#5a1a5a"/><path d="M8 5.6 Q8.8 3.4 10.2 2.4" stroke="#f08ade" stroke-width="1.1" fill="none" stroke-linecap="round"/></svg></span> 支持五线谱、及<a>部分站点、视频、音频解析</a>；</div>
<span class="cb" style="top:740.8px"><svg width="15" height="15" viewBox="0 0 15 15"><path d="M3.2 7.8 L6.1 10.7 L11.7 4.3" fill="none" stroke="#fff" stroke-width="1.9"/></svg></span>
<div class="rl" style="top:736px;left:805.3px"><span class="eb" style="width:27.4px"><svg width="20" height="20" viewBox="0 0 20 20" style="bottom:-2px"><path d="M10 3.4 L12.3 8 L17.3 8.7 L13.7 12.2 L14.6 17.2 L10 14.8 L5.4 17.2 L6.3 12.2 L2.7 8.7 L7.7 8Z" fill="#fcc21b" stroke="#fcc21b" stroke-width="2.2" stroke-linejoin="round"/><path d="M10 3.4 L11.9 8.2 L16.8 8.8 L10 11Z" fill="#fedc5a" opacity="0.55"/><path d="M6.3 14 L5.4 17.2 L10 14.8 L14.6 17.2 L13.9 14 Z" fill="#f5a81c" opacity="0.55"/><g fill="#f9b21c"><path d="M3.6 2.6 L5.8 1 L5.6 3.8Z"/><path d="M16.4 2.6 L14.2 1 L14.4 3.8Z"/><path d="M0.2 12.4 L2.4 11.2 L2.2 14Z"/><path d="M19.8 12.4 L17.6 11.2 L17.8 14Z"/><path d="M10 20 L8.6 18.2 L11.4 18.2Z"/></g></svg></span> 增加对<b>所见即所得</b>编辑模式的支持(<code><span class="sym">⌘</span>-<span class="sym">⇧</span>-M</code>)；</div>
<div class="hr" style="top:779px"></div>
<div class="rh" style="top:808px">2. 书写一个质能守恒公式[^LaTeX]</div>
<div class="math" style="top:860px;left:1068.5px"><i>E</i> = <i>mc</i><sup>2</sup></div>
<svg class="art" width="1482" height="901" viewBox="0 0 1482 901"><path d="M835.4 435 L862.8 439.7 M835.4 688 L862.8 692.7 M1039.6 470.4 L1066.6 474.4 M1039.6 723.4 L1066.6 727.4 M1301 515.1 L1327.8 519.6 M1301 768.1 L1327.8 772.6 M1344 522.3 L1375.8 527.6 M1344 775.3 L1375.8 780.6 M1391.8 530.3 L1423.1 535.7 M1391.8 783.3 L1423.1 788.7 M1440.3 538.7 L1471.6 544.5 M1440.3 791.7 L1471.6 797.5 " stroke="#d9d9d9" stroke-width="0.8" stroke-dasharray="5 2" fill="none"/></svg>
</div>
<div id="rs" class="abs"><i></i></div>
<div id="ft" class="abs"><span class="abs" style="left:14px;top:6px">字数: 1570</span><span class="abs" style="left:1388.5px;top:6px">同步滚动</span><span class="abs fcb"><svg width="14.5" height="14.5" viewBox="0 0 14.500 14.500"><path d="M2.200 7.800 L5.300 12.200 L12.200 2" fill="none" stroke="#262626" stroke-width="1.400" stroke-linejoin="round" stroke-linecap="round"/></svg></span></div>
<!--PE-->
</div>
<!--OVS--><svg id="ov" class="abs" style="left:0;top:0" width="1495" height="150" viewBox="0 0 1495 150">
<!-- app icon -->
<g>
<path d="M17.2 17.2 Q17 14.2 19.8 13.2 L21.6 12.4 Q23 11.9 24.4 12.6 L29.6 15.2 Q31.2 16 31.2 17.8 V25.6 Q31.2 27 30 27.8 L27.2 29.6 Q26 30.3 24.8 29.7 L18.4 26.4 Q17.2 25.8 17.2 24.4 Z" fill="#2b8cf0"/>
<path d="M26.6 18.4 L31.2 16.6 V25.8 Q31.2 27 30 27.8 L27.2 29.6 Q26.8 29.8 26.6 29.8 Z" fill="#2f7fe0"/>
<path d="M19.4 13.4 L21.6 12.4 Q23 11.9 24.4 12.6 L29.6 15.2 Q30.6 15.7 31 16.6 L26.6 18.4 Z" fill="#5aa8f8"/>
<path d="M18.8 15.8 L23 17.6 L25.8 20 V27.4 L18.8 24.2 Z" fill="#f4f8ff"/>
<path d="M20.300 23.600 V19.800 L22.300 22.700 L24.300 21.700 V25.500" fill="none" stroke="#2d86ea" stroke-width="1.300" stroke-linejoin="round"/>
</g>
<!-- window controls -->
<g stroke="#9c9c9c" stroke-width="1.1" fill="none">
<path d="M1334 20.5 H1346.2"/>
<rect x="1392.5" y="15.5" width="11.2" height="11.2" rx="1.6"/>
<path d="M1451.3 15 L1463 26.8 M1463 15 L1451.3 26.8"/>
</g>
<!-- menu icons -->
<g stroke="#1c1c1c" stroke-width="1.9" fill="none">
<path d="M54.9 64.3 V76.1 M48.9 70.2 H60.9"/>
<path d="M162.3 70.9 L166.4 75 L175.8 65.2"/>
</g>
<g fill="#1c1c1c">
<path transform="translate(273.68 59.88) scale(0.84)" d="M17 3H5c-1.11 0-2 .9-2 2v14c0 1.1.89 2 2 2h14c1.1 0 2-.9 2-2V7l-4-4zm-5 16c-1.66 0-3-1.34-3-3s1.34-3 3-3 3 1.34 3 3-1.34 3-3 3zm3-10H5V5h10v4z"/>
<path transform="translate(387.68 59.88) scale(0.84)" d="M17 3H5c-1.11 0-2 .9-2 2v14c0 1.1.89 2 2 2h14c1.1 0 2-.9 2-2V7l-4-4zm-5 16c-1.66 0-3-1.34-3-3s1.34-3 3-3 3 1.34 3 3-1.34 3-3 3zm3-10H5V5h10v4z"/>
<path transform="translate(519.7 59.73) scale(0.857)" d="M19 9h-4V3H9v6H5l7 7 7-7zM5 18v2h14v-2H5z"/>
<circle cx="1373" cy="70" r="4.3"/>
</g>
<g stroke="#1c1c1c" fill="none">
<circle cx="693.9" cy="69.8" r="7.3" stroke-width="1.6"/>
<path d="M693.9 68.8 V73.8" stroke-width="1.7"/>
<path d="M693.9 65.3 V67" stroke-width="1.7"/>
<path stroke-width="2" d="M1373 61 v2.6 M1373 76.4 v2.6 M1364 70 h2.6 M1379.4 70 h2.6 M1366.4 63.4 l2.100 2.100 M1377.500 74.500 l2.100 2.100 M1366.400 76.600 l2.100 -2.100 M1377.500 65.500 l2.100 -2.100"/>
</g>
<!-- toolbar -->
<rect x="1365" y="108.1" width="34.7" height="29.5" rx="4" fill="#f3f3f3"/>
<g stroke="#e2e2e2" stroke-width="1.3"><path d="M461.4 116 V134 M842.9 116 V134"/></g>
<g stroke="#3b4855" stroke-width="1.7" fill="none" stroke-linecap="round" stroke-linejoin="round">
<!-- B -->
<path d="M25.8 116 H32.6 a3.3 3.3 0 0 1 0 6.6 H25.8 M25.8 122.6 H33.35 a3.55 3.55 0 0 1 0 7.1 H25.8 Z M25.8 116 V129.7"/>
<!-- I -->
<path d="M69.2 116 H76.8 M64.8 129.7 H72.6 M73.3 116 L68.6 129.7" stroke-linecap="butt"/>
<!-- U -->
<path d="M106.6 116 V121.4 a4.3 4.3 0 0 0 8.6 0 V116" stroke-linecap="butt"/>
<path d="M104.4 129.7 H117.6"/>
<!-- S -->
<path d="M144.8 122.8 H157.2 M154.6 116.4 H148.6 a3 3 0 0 0 -3 3 V120 M145.8 129.6 H152.8 a3.2 3.2 0 0 0 3.2 -3.2 c0 -1.4 -0.4 -2.3 -1.2 -3.2"/>
<!-- H -->
<path d="M186.5 116 V130 M195.5 116 V130 M186.5 122.9 H195.5" stroke-linecap="butt"/>
<!-- x2 sub -->
<path d="M224.4 117.4 L231 123.8 M231 117.4 L224.4 123.8"/>
<!-- x2 sup -->
<path d="M264.3 122.4 L271.1 128.8 M271.1 122.4 L264.3 128.8"/>
<!-- quote -->
<g stroke-width="1.3">
<path d="M305.1 115.6 h3 a1.6 1.6 0 0 1 1.6 1.6 v6.8 c0 3.6 -2.2 5.6 -5.4 6.2 l-0.7 -1.6 c1.5 -0.6 2.4 -1.6 2.6 -3 h-1.4 a1.6 1.6 0 0 1 -1.6 -1.6 v-6.8 a1.6 1.6 0 0 1 1.6 -1.6 z"/>
<path d="M314.6 115.6 h3 a1.6 1.6 0 0 1 1.6 1.6 v6.8 c0 3.6 -2.2 5.6 -5.4 6.2 l-0.7 -1.6 c1.5 -0.6 2.4 -1.6 2.6 -3 h-1.4 a1.6 1.6 0 0 1 -1.6 -1.6 v-6.8 a1.6 1.6 0 0 1 1.6 -1.6 z"/>
</g>
<!-- list -->
<path d="M347.3 116.4 H359.2 M347.3 123 H359.2 M347.3 129.7 H359.2"/>
<path d="M342.4 116.400 h0.200 M342.400 123 h0.200 M342.400 129.700 h0.200" stroke-width="1.500"/>
<!-- ordered list -->
<path d="M390.3 116.4 H399.2 M390.3 123 H399.2 M390.3 129.7 H399.2"/>
<!-- check list -->
<path d="M432.3 116.4 H439.2 M432.3 123 H439.2 M432.3 129.7 H439.2"/>
<rect x="422.5" y="115.2" width="5.2" height="5.2" rx="1.2"/>
<path d="M422.4 127.6 L424.4 129.7 L428 125.9"/>
<!-- code -->
<path d="M489.1 117.8 L484 123 L489.1 128.2 M495.1 117.8 L500.2 123 L495.1 128.2" stroke-linecap="butt" stroke-linejoin="miter"/>
<!-- inline code -->
<rect x="524.7" y="115.4" width="14.7" height="14.8" rx="2.4"/>
<path d="M530.3 120.3 L527.7 123 L530.3 125.7 M533.8 120.3 L536.4 123 L533.8 125.7"/>
<!-- link -->
<g transform="translate(561.8 112.9) scale(0.84)" stroke-width="1.95">
<path d="M10 13a5 5 0 0 0 7.54.54l3-3a5 5 0 0 0-7.07-7.07l-1.72 1.71"/><path d="M14 11a5 5 0 0 0-7.54-.54l-3 3a5 5 0 0 0 7.07 7.07l1.71-1.71"/>
</g>
<!-- image -->
<rect x="604.9" y="115.4" width="14.3" height="14.8" rx="2.4"/>
<circle cx="609.6" cy="120.4" r="1.6"/>
<path d="M607.2 130 L614.8 122.9 a1.5 1.5 0 0 1 2.1 0 L619.2 125.3"/>
<!-- table -->
<rect x="644.7" y="115.4" width="14.5" height="14.8" rx="2.4"/>
<path d="M652 115.4 V130.2 M644.7 120.3 H659.2 M644.7 125.3 H659.2"/>
<!-- chart -->
<path d="M684.5 115.6 V128.1 a2 2 0 0 0 2 2 H699.2"/>
<path d="M687.8 121.4 L689.6 119.8 L693 123 L697.8 119.2 V126 a1 1 0 0 1 -1 1 H688.8 a1 1 0 0 1 -1 -1 Z"/>
<!-- sigma box -->
<rect x="724.9" y="115.4" width="14.3" height="14.8" rx="2.4"/>
<!-- undo -->
<path d="M770 118.8 L765.5 123.2 L770 127.6 M765.5 123.2 H774.9 a3.6 3.6 0 0 1 3.6 3.6 V128.2"/>
<!-- redo -->
<path d="M814.2 118.8 L818.7 123.2 L814.2 127.6 M818.7 123.2 H808.8 a3.6 3.6 0 0 0 -3.6 3.6 V128.2"/>
<!-- info -->
<circle cx="873.9" cy="123" r="7.2"/>
<path d="M873.9 119 V124.2 M873.9 126.9 V127"/>
<!-- smile -->
<circle cx="913.9" cy="123" r="7.2"/>
<path d="M911.3 120.7 v0.3 M916.5 120.7 v0.3" stroke-width="1.9"/>
<path d="M911.1 125.2 h5.600 a2.800 2.500 0 0 1 -5.600 0 z" fill="#3b4855" stroke-width="0.800"/>
<!-- printer -->
<path d="M949.4 119.6 V116.3 a1.5 1.5 0 0 1 1.5 -1.5 H957.4 a1.5 1.5 0 0 1 1.5 1.5 V119.6"/>
<path d="M949.4 128.2 H948 a2.3 2.3 0 0 1 -2.3 -2.3 V122 a2.3 2.3 0 0 1 2.3 -2.3 H960.2 a2.3 2.3 0 0 1 2.3 2.3 V125.900 a2.3 2.3 0 0 1 -2.3 2.3 H958.9"/>
<rect x="949.4" y="124.8" width="9.5" height="6.2" rx="1"/>
<!-- expand -->
<path d="M1303.4 121.6 L1309.6 115 M1304.6 114.9 H1309.7 V120 M1300.4 124.6 L1294.2 130.4 M1294.1 125.3 V130.4 H1299.2" stroke-linecap="butt"/>
<!-- fullscreen -->
<path d="M1339.6 120 L1334.6 114.9 M1334.5 119 V114.8 H1338.7 M1344.8 120 L1349.8 114.9 M1345.7 114.8 H1349.9 V119 M1339.6 125.2 L1334.6 130.3 M1334.5 126.2 V130.4 H1338.7 M1344.8 125.2 L1349.8 130.3 M1345.7 130.4 H1349.9 V126.2" stroke-linecap="butt"/>
<!-- eye -->
<path d="M1373.8 122.9 C1376 118.6 1379 117 1382 117 S1388 118.6 1390.2 122.9 C1388 127.2 1385 128.8 1382 128.8 S1376 127.2 1373.8 122.9Z"/>
<circle cx="1382" cy="122.9" r="2.5"/>
<!-- eye bracket -->
<path d="M1416 122.8 C1417.600 120 1419.600 118.900 1421.900 118.900 S1426.200 120 1427.800 122.800 C1426.200 125.600 1424.200 126.700 1421.900 126.700 S1417.600 125.600 1416 122.800Z"/>
<circle cx="1421.9" cy="122.8" r="1.3" fill="#3b4855"/>
<path d="M1414.2 118 V117.100 a2 2 0 0 1 2 -2 H1427.500 a2 2 0 0 1 2 2 V118 M1414.2 127.600 V128.400 a2 2 0 0 0 2 2 H1427.500 a2 2 0 0 0 2 -2 V127.600"/>
<!-- outline -->
<path d="M1454.3 117 V126.800 a2 2 0 0 0 2 2 H1458.600 M1454.300 122.900 H1458.600 M1454.300 117 H1469.500 M1462.500 122.900 H1469.500 M1462.500 128.800 H1469.500"/>
</g>
<g fill="#3b4855" font-family="'Liberation Sans',sans-serif" font-weight="700">
<text x="233.400" y="129.500" font-size="9">2</text>
<text x="273.300" y="123.300" font-size="9">2</text>
<text x="382" y="120.800" font-size="8">1</text>
<text x="382" y="131" font-size="8">2</text>
<text x="732.100" y="127.300" font-size="12" text-anchor="middle" font-weight="700" font-family="'Liberation Sans',sans-serif">Σ</text>
</g>
</svg>
<!--OVE-->
</body>
</html>
